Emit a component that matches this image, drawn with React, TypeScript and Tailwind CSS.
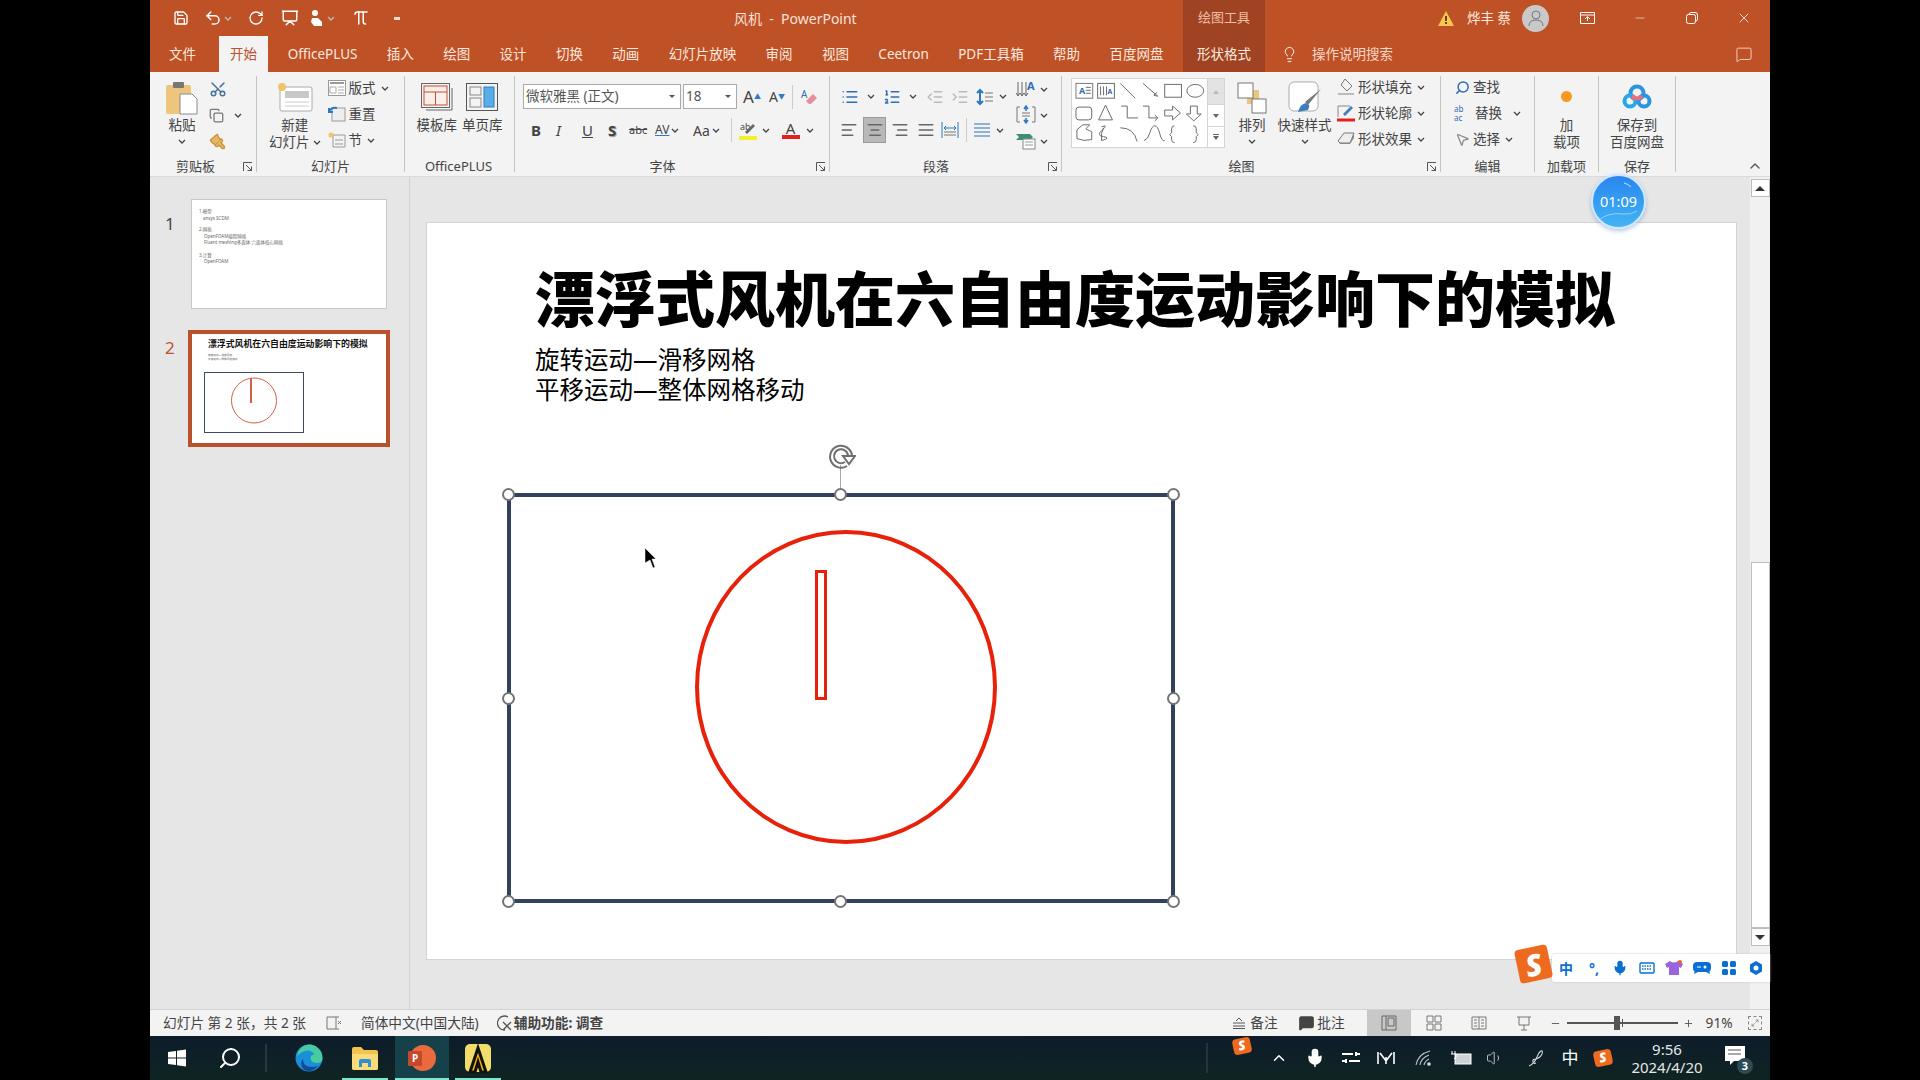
import {
  AlignCenter,
  AlignJustify,
  AlignLeft,
  AlignRight,
  ChevronUp,
  Copy,
  IndentDecrease,
  IndentIncrease,
  Lightbulb,
  List,
  ListOrdered,
  Maximize2,
  MessageSquare,
  Minus,
  MousePointer2,
  Mic,
  Paintbrush,
  Pi,
  Plus,
  Presentation,
  RotateCcw,
  Save,
  Scissors,
  Search,
  Undo2,
  Volume1,
  X,
} from "lucide-react";
import type { ReactNode } from "react";

const tabs = [
  "OfficePLUS",
  "插入",
  "绘图",
  "设计",
  "切换",
  "动画",
  "幻灯片放映",
  "审阅",
  "视图",
  "Ceetron",
  "PDF工具箱",
  "帮助",
  "百度网盘",
];

function Chev({ className = "" }: { className?: string }) {
  return (
    <svg viewBox="0 0 8 5" className={"h-[5px] w-[8px] shrink-0 " + className} fill="none" stroke="#444" strokeWidth="1.3">
      <path d="M1 1l3 3 3-3" />
    </svg>
  );
}

function Launcher({ className = "" }: { className?: string }) {
  return (
    <svg viewBox="0 0 10 10" className={"absolute bottom-[4px] h-[10px] w-[10px] " + className} fill="none" stroke="#555" strokeWidth="1">
      <path d="M.5 9V.5H9M3 3l5.5 5.5M8.5 4.5v4h-4" />
    </svg>
  );
}

function Group({ label, className, labelClass = "", children }: { label: string; className: string; labelClass?: string; children: ReactNode }) {
  return (
    <>
      <div className={"relative flex h-[100px] shrink-0 flex-col " + className}>
        <div className="flex h-[80px] pt-0">{children}</div>
        <div className={"flex h-[20px] items-center justify-center text-[13px] leading-none text-[#444] " + labelClass}>{label}</div>
      </div>
      <div className="h-[96px] w-px shrink-0 bg-[#c4c4c4]" />
    </>
  );
}

function Big({ icon, lines, chev, className = "" }: { icon: ReactNode; lines: string[]; chev?: boolean; className?: string }) {
  return (
    <div className={"flex flex-col items-center text-[13.5px] leading-[17px] text-[#444] " + className}>
      <div className="flex h-[41px] items-center justify-center">{icon}</div>
      {lines.map((line, i) => (
        <div key={i} className="flex items-center gap-[3px] whitespace-nowrap">
          {line}
          {chev && i === lines.length - 1 && lines.length > 1 && <Chev />}
        </div>
      ))}
      {chev && lines.length === 1 && <Chev className="mt-[5px]" />}
    </div>
  );
}

function SmallRow({ icon, text, chev = true, gap = "gap-[3px]" }: { icon: ReactNode; text: string; chev?: boolean; gap?: string }) {
  return (
    <div className={"flex h-[26px] items-center whitespace-nowrap text-[13.5px] text-[#444] " + gap}>
      {icon}
      <span>{text}</span>
      {chev && <Chev className="ml-[2px]" />}
    </div>
  );
}

function ShapeGallery() {
  return (
    <div className="mt-[2px] flex h-[70px] w-[154px] border border-[#d4d4d4] bg-white">
      <svg viewBox="0 0 137 68" className="h-[68px] w-[136px]" fill="none" stroke="#6b6b6b" strokeWidth="1">
        <rect x="4" y="4" width="17" height="15" stroke="#777" />
        <text x="7" y="15" fontSize="9" fill="#2f6eb5" stroke="none" fontWeight="700">A</text>
        <path d="M14 8h5M14 11h5M14 14h5" />
        <rect x="26" y="4" width="17" height="15" />
        <path d="M29 7v9M32 7v9M35 7v9" />
        <text x="36" y="15" fontSize="7" fill="#2f6eb5" stroke="none" fontWeight="700">A</text>
        <path d="M49 4l15 15M72 4l15 13M87 17l-4-1 3-3" />
        <rect x="94" y="5" width="17" height="13" />
        <ellipse cx="125" cy="11.5" rx="8.5" ry="6.5" />
        <rect x="4" y="28" width="16" height="13" rx="3" />
        <path d="M34 26l-7 15h14zM50 27h6v12h11M72 27h6v12h9M84 36l3 3-3 3" />
        <path d="M94 31h8v-4l8 7-8 7v-4h-8zM120 27h7v8h4l-7.5 7-7.5-7h4z" />
        <path d="M5 60V51l6-5h7l-4 4 6 3v8q-8 2-15-1zM30 48q7-3 1 3-7 6 1 7t-2 4q-1-8 2-13" />
        <path d="M49 49q14 0 17 14M73 62q4-1 6-8t5-7 5 8 5 7" />
        <path d="M104 47q-3 0-3 3v4l-2 2 2 2v3q0 3 3 3M123 47q3 0 3 3v4l2 2-2 2v3q0 3-3 3" />
      </svg>
      <div className="flex w-[17px] flex-col border-l border-[#d4d4d4]">
        <div className="flex h-[25px] items-center justify-center bg-[#e3e3e3]">
          <div className="h-0 w-0 border-x-[3px] border-b-[4px] border-x-transparent border-b-[#bbb]" />
        </div>
        <div className="flex h-[23px] items-center justify-center border-y border-[#d4d4d4]">
          <div className="h-0 w-0 border-x-[3px] border-t-[4px] border-x-transparent border-t-[#666]" />
        </div>
        <div className="flex flex-1 flex-col items-center justify-center gap-[1px]">
          <div className="h-px w-[6px] bg-[#666]" />
          <div className="h-0 w-0 border-x-[3px] border-t-[4px] border-x-transparent border-t-[#666]" />
        </div>
      </div>
    </div>
  );
}

function Ribbon() {
  const ic = "h-[18px] w-[18px] shrink-0";
  return (
    <div className="flex h-[104px] shrink-0 bg-[#f3f3f3] pt-[4px]">
      <Group label="剪贴板" className="w-[106px]" labelClass="pr-[15px]">
        <div className="flex w-full">
          <div className="ml-[18px] w-[28px]">
            <Big
              chev
              lines={["粘贴"]}
              icon={
                <svg viewBox="0 0 32 34" className="mt-[3px] h-[34px] w-[32px]">
                  <rect x="0" y="4" width="25" height="29" rx="2" fill="#edc57c" />
                  <rect x="7" y="1" width="11" height="6" rx="1" fill="#777" />
                  <path d="M14 13h12l5 5v15H14z" fill="#fff" stroke="#8a8a8a" />
                </svg>
              }
            />
          </div>
          <div className="ml-[13px] flex flex-col">
            <div className="flex h-[26px] items-center"><Scissors className="h-[18px] w-[18px] -rotate-90 text-[#47709f]" /></div>
            <div className="flex h-[26px] items-center gap-[10px]"><Copy className="h-[15px] w-[15px] text-[#777]" /><Chev /></div>
            <div className="flex h-[26px] items-center"><Paintbrush className="h-[17px] w-[17px] rotate-90 fill-[#e6b566] text-[#c9963f]" /></div>
          </div>
        </div>
        <Launcher className="right-[3px]" />
      </Group>

      <Group label="幻灯片" className="w-[147px]">
        <div className="ml-[12px] flex">
          <Big
            chev
            lines={["新建", "幻灯片"]}
            icon={
              <svg viewBox="0 0 36 30" className="h-[30px] w-[36px]">
                <rect x="3" y="5" width="32" height="24" rx="2" fill="#fff" stroke="#aaa" />
                <rect x="8" y="9" width="24" height="7" fill="#c8c8c8" />
                <path d="M8 20h24M8 24h24" stroke="#ccc" />
                <circle cx="5" cy="5" r="4" fill="#f1c36a" />
              </svg>
            }
          />
          <div className="-mt-[1px] ml-[7px] flex flex-col">
            <SmallRow icon={<svg viewBox="0 0 18 16" className={ic}><rect x=".5" y=".5" width="17" height="15" fill="#fff" stroke="#999" /><path d="M2 3h14" stroke="#999" strokeWidth="2" /><path d="M2 7h6v6H2zM10 7h6M10 10h6M10 13h6" stroke="#aaa" fill="none" /></svg>} text="版式" />
            <SmallRow chev={false} icon={<svg viewBox="0 0 18 16" className={ic}><rect x="4" y="2" width="13" height="13" fill="#eee" stroke="#999" /><path d="M1 6q2-5 8-4M1 2v4h4" fill="none" stroke="#2f78c2" strokeWidth="2" /></svg>} text="重置" />
            <SmallRow icon={<svg viewBox="0 0 18 16" className={ic}><path d="M5 3h12M5 3v12h12V3M7 8h8M7 12h8" fill="none" stroke="#999" /><circle cx="3" cy="3" r="2.5" fill="#f1c36a" /></svg>} text="节" />
          </div>
        </div>
      </Group>

      <Group label="OfficePLUS" className="w-[109px]" labelClass="pr-[2px]">
        <div className="flex w-full justify-center gap-[5px]">
          <Big lines={["模板库"]} icon={
            <svg viewBox="0 0 32 28" className="h-[28px] w-[32px]" fill="none">
              <rect x=".5" y=".5" width="28" height="24" stroke="#666" />
              <path d="M31 5v22H5" stroke="#666" />
              <rect x="3" y="3" width="23" height="19" fill="#fbeee9" stroke="#c0503a" />
              <path d="M3 9h23M14.5 9v13" stroke="#c0503a" />
            </svg>
          } />
          <Big lines={["单页库"]} icon={
            <svg viewBox="0 0 32 28" className="h-[28px] w-[32px]" fill="none">
              <rect x=".5" y=".5" width="31" height="27" stroke="#555" />
              <rect x="4" y="4" width="11" height="8" stroke="#888" />
              <rect x="4" y="15" width="11" height="9" stroke="#888" />
              <rect x="18" y="4" width="10" height="20" fill="#5aaee8" stroke="#2f78c2" />
            </svg>
          } />
        </div>
      </Group>

      <Group label="字体" className="w-[314px]" labelClass="pr-[19px]">
        <div className="flex w-full flex-col pl-[8px]">
          <div className="mt-[8px] flex h-[25px] items-center">
            <div className="flex h-[25px] w-[158px] items-center justify-between border border-[#aaa] bg-white pl-[2px] pr-[5px] text-[13.5px] text-[#555]">
              微软雅黑 (正文)
              <div className="h-0 w-0 border-x-[3px] border-t-[3px] border-x-transparent border-t-[#555]" />
            </div>
            <div className="ml-[2px] flex h-[25px] w-[54px] items-center justify-between border border-[#aaa] bg-white pl-[2px] pr-[5px] text-[13.5px] text-[#555]">
              18
              <div className="h-0 w-0 border-x-[3px] border-t-[3px] border-x-transparent border-t-[#555]" />
            </div>
            <span className="ml-[6px] w-[24px] text-[17px] text-[#444]">A<sup className="text-[7px] text-[#2f78c2]">▲</sup></span>
            <span className="w-[24px] pl-[2px] text-[14px] text-[#444]">A<sup className="text-[7px] text-[#2f78c2]">▼</sup></span>
            <div className="ml-[1px] h-[24px] w-px bg-[#ccc]" />
            <svg viewBox="0 0 18 18" className="ml-[7px] h-[18px] w-[18px]">
              <text x="1" y="10" fontSize="10" fill="#3a6ea5">A</text>
              <path d="M6 13l7-7 4 4-6 6H9z" fill="#e88d9b" />
            </svg>
          </div>
          <div className="mt-[8px] flex h-[26px] items-center text-[#444]">
            <span className="ml-[8px] w-[25px] text-[15px] font-bold">B</span>
            <span className="w-[26px] text-[15px] italic">I</span>
            <span className="w-[26px] text-[15px] underline">U</span>
            <span className="w-[21px] text-[15px] font-bold [text-shadow:1px_1px_1px_#999]">S</span>
            <span className="w-[26px] text-[11px] line-through">abc</span>
            <span className="flex w-[33px] items-center gap-[2px] text-[12px] underline decoration-[#2f78c2]">AV<Chev /></span>
            <span className="ml-[5px] flex w-[38px] items-center gap-[2px] text-[14px]">Aa<Chev /></span>
            <div className="h-[24px] w-px bg-[#ccc]" />
            <div className="ml-[7px] flex w-[34px] items-center gap-[5px]">
              <svg viewBox="0 0 18 19" className="h-[19px] w-[18px]">
                <text x="1" y="9" fontSize="9" fill="#444">ab</text>
                <path d="M6 11l8-8 2 2-8 8z" fill="#666" />
                <rect y="15" width="18" height="4" fill="#f4f02a" />
              </svg>
              <Chev />
            </div>
            <div className="ml-[8px] flex items-center gap-[6px]">
              <div className="flex w-[19px] flex-col items-center">
                <span className="text-[15px] leading-[14px]">A</span>
                <div className="h-[4px] w-[18px] bg-[#e3201b]" />
              </div>
              <Chev />
            </div>
          </div>
        </div>
        <Launcher className="right-[3px]" />
      </Group>

      <Group label="段落" className="w-[231px]" labelClass="pr-[19px]">
        <div className="flex w-full">
          <div className="ml-[11px] flex flex-col">
            <div className="mt-[8px] flex h-[25px] items-center text-[#555]">
              <List className="h-[18px] w-[18px] text-[#2f6eb5]" />
              <Chev className="ml-[8px]" />
              <ListOrdered className="ml-[8px] h-[18px] w-[18px] text-[#2f6eb5]" />
              <Chev className="ml-[8px]" />
              <IndentDecrease className="ml-[9px] h-[18px] w-[18px] text-[#bbb]" />
              <IndentIncrease className="ml-[7px] h-[18px] w-[18px] text-[#bbb]" />
              <svg viewBox="0 0 18 18" className="ml-[7px] h-[18px] w-[18px]" fill="none">
                <path d="M4 2v14M1 5l3-3 3 3M1 13l3 3 3-3" stroke="#2f78c2" strokeWidth="2" />
                <path d="M9 5h8M9 9h8M9 13h8" stroke="#777" />
              </svg>
              <Chev className="ml-[5px]" />
            </div>
            <div className="-ml-[1px] mt-[8px] flex h-[26px] items-center text-[#666]">
              <AlignLeft className="h-[18px] w-[18px]" />
              <div className="ml-[5px] flex h-[26px] w-[23px] items-center justify-center border border-[#999] bg-[#b8b8b8]">
                <AlignCenter className="h-[18px] w-[18px]" />
              </div>
              <AlignRight className="ml-[5px] h-[18px] w-[18px]" />
              <AlignJustify className="ml-[8px] h-[18px] w-[18px]" />
              <svg viewBox="0 0 18 18" className="ml-[6px] h-[18px] w-[18px]" fill="none">
                <path d="M1 1v16M17 1v16" stroke="#2f78c2" />
                <path d="M5 5l-2 2 2 2M13 5l2 2-2 2M3 7h12" stroke="#2f78c2" />
                <path d="M3 11h12M3 14h12" stroke="#777" />
              </svg>
              <div className="ml-[7px] h-[24px] w-px bg-[#ccc]" />
              <svg viewBox="0 0 18 18" className="ml-[6px] h-[18px] w-[18px]" fill="none" stroke="#2f6eb5">
                <path d="M1 3h16M1 7h16M1 11h16M1 15h16" />
              </svg>
              <Chev className="ml-[5px]" />
            </div>
          </div>
          <div className="ml-[9px] flex flex-col">
            <div className="flex h-[26px] items-center gap-[4px]">
              <svg viewBox="0 0 20 20" className="h-[20px] w-[20px]" fill="none">
                <path d="M2 3v13M6 3v13M10 3v13M0 14l2 3 2-3M4 14l2 3 2-3M8 14l2 3 2-3" stroke="#666" />
                <text x="11" y="11" fontSize="11" fill="#2f6eb5" fontWeight="700">A</text>
              </svg>
              <Chev />
            </div>
            <div className="flex h-[26px] items-center gap-[4px]">
              <svg viewBox="0 0 20 20" className="h-[20px] w-[20px]" fill="none">
                <path d="M4 2H1v15h3M16 2h3v15h-3M6 8h8M6 11h8" stroke="#777" />
                <path d="M10 1v5M8 4l2-3 2 3M10 13v5M8 15l2 3 2-3" stroke="#2f78c2" strokeWidth="1.5" />
              </svg>
              <Chev />
            </div>
            <div className="flex h-[26px] items-center gap-[4px]">
              <svg viewBox="0 0 20 18" className="h-[18px] w-[20px]">
                <path d="M0 2h14l3 3-3 3H0l3-3z" fill="#3f8f6f" />
                <rect x="7" y="7" width="12" height="10" fill="#fff" stroke="#888" />
                <path d="M9 10h8M9 13h8" stroke="#999" />
              </svg>
              <Chev />
            </div>
          </div>
        </div>
        <Launcher className="right-[3px]" />
      </Group>

      <Group label="绘图" className="w-[378px]" labelClass="pr-[19px]">
        <div className="flex w-full">
          <div className="ml-[9px]"><ShapeGallery /></div>
          <div className="ml-[12px] w-[30px]">
            <Big chev lines={["排列"]} icon={
              <svg viewBox="0 0 30 32" className="mt-[2px] h-[32px] w-[30px]">
                <rect x="10" y="8" width="12" height="14" fill="#edc57c" />
                <rect x="1" y="1" width="15" height="15" fill="#fff" stroke="#777" />
                <rect x="15" y="17" width="14" height="14" fill="#fff" stroke="#777" />
              </svg>
            } />
          </div>
          <div className="ml-[9px] w-[57px]">
            <Big chev lines={["快速样式"]} icon={
              <svg viewBox="0 0 34 36" className="mt-[4px] h-[36px] w-[34px]">
                <rect x="1" y="1" width="29" height="29" rx="5" fill="#fff" stroke="#aaa" />
                <path d="M33 8L20 24l-3-3z" fill="#777" />
                <path d="M18 22q-6 1-8 9l10-2q2-3 1-5z" fill="#3f7fc0" />
              </svg>
            } />
          </div>
          <div className="-mt-[2px] ml-[4px] flex flex-col">
            <SmallRow icon={<svg viewBox="0 0 18 18" className={ic} fill="none"><path d="M8 1l7 7-5 5-6-6z" stroke="#777" /><path d="M1 16h16" stroke="#bbb" strokeWidth="2" /></svg>} text="形状填充" />
            <SmallRow icon={<svg viewBox="0 0 18 18" className={ic} fill="none"><path d="M1 13V2h12" stroke="#888" /><path d="M6 10l8-8 2 2-8 8z" fill="#3f7fc0" /><path d="M0 16h18" stroke="#e3201b" strokeWidth="3" /></svg>} text="形状轮廓" />
            <SmallRow icon={<svg viewBox="0 0 18 18" className={ic}><path d="M1 11l6-8h10l-4 10H3z" fill="#eee" stroke="#777" /><path d="M13 13l4-10v5l-4 6H3l-2-3 2 2z" fill="#888" /></svg>} text="形状效果" />
          </div>
        </div>
        <Launcher className="right-[3px]" />
      </Group>

      <Group label="编辑" className="w-[93px]">
        <div className="-mt-[2px] flex flex-col pl-[14px]">
          <SmallRow chev={false} gap="gap-[3px]" icon={<Search className="h-[15px] w-[15px] -scale-x-100 text-[#2f6eb5]" strokeWidth={2.4} />} text="查找" />
          <div className="flex h-[26px] items-center text-[13.5px] text-[#444]">
            <span className="-ml-[1px] flex w-[21px] flex-col text-[8px] leading-[9px] text-[#2f6eb5]"><span>ab</span><span>ac</span></span>
            <span>替换</span>
            <Chev className="ml-[11px]" />
          </div>
          <SmallRow gap="gap-[3px]" icon={<MousePointer2 className="h-[15px] w-[15px] text-[#888]" />} text="选择" />
        </div>
      </Group>

      <Group label="加载项" className="w-[63px]">
        <div className="w-full">
          <Big lines={["加", "载项"]} icon={<div className="h-[11px] w-[11px] rounded-full bg-[#f59a23]" />} />
        </div>
      </Group>

      <Group label="保存" className="w-[76px]">
        <div className="w-full">
          <Big lines={["保存到", "百度网盘"]} icon={
            <svg viewBox="0 0 30 26" className="h-[26px] w-[30px]" fill="none">
              <circle cx="15" cy="9" r="6.5" stroke="#2b93e0" strokeWidth="4" />
              <circle cx="8" cy="17" r="5.5" stroke="#27a7e6" strokeWidth="4" />
              <circle cx="22" cy="17" r="5.5" stroke="#2b93e0" strokeWidth="4" />
              <path d="M10 12q5 5 10 0" stroke="#e8707a" strokeWidth="4" />
            </svg>
          } />
        </div>
      </Group>

      <div className="flex flex-1 items-end justify-end pb-[2px] pr-[7px]">
        <ChevronUp className="h-[16px] w-[16px] text-[#555]" />
      </div>
    </div>
  );
}

function ThumbOne() {
  return (
    <div className="ml-[41px] mt-[22px] h-[110px] w-[196px] border border-[#c8c8c8] bg-white pl-[7px] pt-[8px] text-[4.5px] leading-[6.5px] text-[#666]">
      <div>1.模型</div>
      <div className="pl-[4px]">ansys SCDM</div>
      <div className="mt-[5px]">2.网格</div>
      <div className="pl-[5px]">OpenFOAM编程网格</div>
      <div className="pl-[5px]">Fluent meshing多面体 六面体核心网格</div>
      <div className="mt-[6px]">3.计算</div>
      <div className="pl-[5px]">OpenFOAM</div>
    </div>
  );
}

function ThumbTwo() {
  return (
    <div className="ml-[38px] mt-[21px] flex h-[117px] w-[202px] flex-col border-[4px] border-[#b9512c] bg-white pl-[16px] pt-[3px]">
      <div className="whitespace-nowrap text-[8.9px] font-bold leading-[14px] text-[#111]">漂浮式风机在六自由度运动影响下的模拟</div>
      <div className="mt-[2px] text-[2.7px] leading-[4px] text-[#666]">旋转运动—滑移网格<br />平移运动—整体网格移动</div>
      <svg viewBox="0 0 100 61" className="-ml-[4px] mt-[11px] h-[61px] w-[100px]" fill="none">
        <rect x=".5" y=".5" width="99" height="60" stroke="#3c4a64" />
        <ellipse cx="50" cy="28.5" rx="22.5" ry="22.5" stroke="#d2604a" />
        <rect x="46" y="6" width="2" height="25" fill="#d2604a" />
      </svg>
    </div>
  );
}

function Handle({ className }: { className: string }) {
  return <div className={"absolute h-[13px] w-[13px] rounded-full border-2 border-[#757575] bg-white " + className} />;
}

function Slide() {
  return (
    <div className="relative h-[738px] w-[1311px] border border-[#d4d4d4] bg-white">
      <div className="absolute left-[108px] top-[37px] whitespace-nowrap text-[60px] font-black leading-[78px] text-black">
        漂浮式风机在六自由度运动影响下的模拟
      </div>
      <div className="absolute left-[108px] top-[122px] text-[24.5px] leading-[29.5px] text-black">
        旋转运动—滑移网格
        <br />
        平移运动—整体网格移动
      </div>
      {/* selected shape */}
      <div className="absolute left-[80px] top-[270px] h-[410px] w-[668px] border-[4px] border-[#33415c]" />
      <div className="absolute left-[268px] top-[307px] h-[314px] w-[302px] rounded-[50%] border-[4px] border-[#e8210a]" />
      <div className="absolute left-[388px] top-[347px] h-[130px] w-[12px] border-[3px] border-[#e8210a]" />
      <div className="absolute left-[413px] top-[242px] h-[30px] w-px bg-[#aaa]" />
      <svg viewBox="0 0 28 28" className="absolute left-[401px] top-[219px] h-[28px] w-[28px]" fill="none" stroke="#6f6f6f" strokeWidth="2">
        <path d="M19 24a11 11 0 1 1 5-8" />
        <path d="M17 20a7 7 0 1 1 3-5" />
        <path d="M15 14h12l-6 8z" fill="#fff" />
      </svg>
      <Handle className="left-[75px] top-[265px]" />
      <Handle className="left-[407px] top-[265px]" />
      <Handle className="left-[740px] top-[265px]" />
      <Handle className="left-[75px] top-[469px]" />
      <Handle className="left-[740px] top-[469px]" />
      <Handle className="left-[75px] top-[672px]" />
      <Handle className="left-[407px] top-[672px]" />
      <Handle className="left-[740px] top-[672px]" />
      <svg viewBox="0 0 13 21" className="absolute left-[217px] top-[324px] h-[21px] w-[13px]">
        <path d="M1 1l11 11H8l3 8-2 1-3-8-5 3z" fill="#000" stroke="#fff" strokeWidth=".5" />
      </svg>
    </div>
  );
}

function SogouLogo({ className, size }: { className: string; size: string }) {
  return (
    <div className={"flex rotate-[-12deg] items-center justify-center rounded-[4px] bg-[#ee6a1f] font-black italic text-white " + className + " " + size}>
      S
    </div>
  );
}

function ViewBtn({ children, active = false }: { children: ReactNode; active?: boolean }) {
  return (
    <div className={"flex h-[26px] w-[44px] items-center justify-center " + (active ? "bg-[#c8c8c8]" : "")}>{children}</div>
  );
}

function StatusBar() {
  return (
    <div className="flex h-[27px] shrink-0 items-center border-t border-[#d2d2d2] bg-[#f3f3f3] pl-[13px] text-[13.7px] text-[#444]">
      <span>幻灯片 第 2 张，共 2 张</span>
      <svg viewBox="0 0 16 14" className="ml-[20px] h-[14px] w-[16px]" fill="none" stroke="#777"><path d="M1 1h9v12H1zM10 1h3M10 13h3M12 5l3 3M15 5l-3 3" /></svg>
      <span className="ml-[19px]">简体中文(中国大陆)</span>
      <svg viewBox="0 0 16 16" className="ml-[18px] h-[16px] w-[16px]" fill="none" stroke="#555" strokeWidth="1.3"><path d="M11 2a7 7 0 1 0-3 13M6 7l8 8M14 7l-8 8" /></svg>
      <span className="ml-[1px] font-bold">辅助功能: 调查</span>
      <div className="ml-[629px] flex items-center">
        <svg viewBox="0 0 14 12" className="h-[12px] w-[14px]" fill="none" stroke="#555"><path d="M4 4l3-3 3 3M1 6h12M1 9h12M1 11.5h12" /></svg>
        <span className="ml-[4px] w-[28px] whitespace-nowrap">备注</span>
      </div>
      <div className="ml-[20px] flex items-center">
        <MessageSquare className="h-[16px] w-[17px] fill-[#444] text-[#444]" />
        <span className="ml-[2px] whitespace-nowrap">批注</span>
      </div>
      <div className="ml-[22px] flex items-center gap-[1px]">
        <ViewBtn active>
          <svg viewBox="0 0 16 16" className="h-[16px] w-[16px]" fill="none" stroke="#666"><path d="M1 1h14v14H1zM5 1v14M7 3h6v8H7z" /></svg>
        </ViewBtn>
        <ViewBtn>
          <svg viewBox="0 0 16 16" className="h-[16px] w-[16px]" fill="none" stroke="#777"><path d="M1 1h6v6H1zM9 1h6v6H9zM1 9h6v6H1zM9 9h6v6H9z" /></svg>
        </ViewBtn>
        <ViewBtn>
          <svg viewBox="0 0 16 16" className="h-[16px] w-[16px]" fill="none" stroke="#777"><path d="M1 2h14v12H1zM8 2v12M3 5h3M3 8h3M3 11h3M10 5h3M10 8h3M10 11h3" /></svg>
        </ViewBtn>
        <ViewBtn>
          <svg viewBox="0 0 16 16" className="h-[16px] w-[16px]" fill="none" stroke="#777"><path d="M1 2h14M3 2v8h10V2M8 10v5M5 15h6" /></svg>
        </ViewBtn>
      </div>
      <Minus className="ml-[4px] h-[11px] w-[11px] text-[#555]" />
      <div className="relative ml-[6px] h-[2px] w-[111px] bg-[#555]">
        <div className="absolute left-[47px] top-[-6px] h-[14px] w-[6px] bg-[#555]" />
        <div className="absolute left-[55px] top-[-3px] h-[8px] w-px bg-[#555]" />
      </div>
      <Plus className="ml-[5px] h-[11px] w-[11px] text-[#555]" />
      <span className="ml-[12px]">91%</span>
      <div className="ml-[15px] flex h-[14px] w-[14px] items-center justify-center border border-dashed border-[#888]">
        <Maximize2 className="h-[8px] w-[8px] text-[#777]" />
      </div>
    </div>
  );
}

function Taskbar() {
  return (
    <div className="flex h-[44px] shrink-0 items-center bg-gradient-to-b from-[#0e1c2b] to-[#0f2422] text-white">
      <div className="ml-[18px] flex w-[18px] justify-center">
        <svg viewBox="0 0 18 18" className="h-[18px] w-[18px]" fill="#fff">
          <path d="M0 3l8-1v6.5H0zM9 1.8L18 .5v8H9zM0 9.5h8V16l-8-1zM9 9.5h9v8l-9-1.3z" />
        </svg>
      </div>
      <Search className="ml-[32px] h-[24px] w-[24px] -scale-x-100 text-white" strokeWidth={2} />
      <div className="ml-[23px] h-[28px] w-[2px] bg-[#2a3742]" />
      <div className="ml-[19px] flex h-[44px] w-[46px] items-center justify-center">
        <svg viewBox="0 0 28 28" className="h-[28px] w-[28px]">
          <circle cx="14" cy="14" r="13.5" fill="#1a8fd8" />
          <path d="M14 .5A13.5 13.5 0 0 1 27.5 14q0 5-5 5-7 0-7-5 0-3 4-4-4-5-10-3Q4 9 2 13 4 1 14 .5z" fill="#47cba0" />
          <path d="M8 15q0 8 9 8 3 0 6-1-4 5-9 5-5 0-7-4-2-5 1-8z" fill="#114a9c" />
        </svg>
      </div>
      <div className="relative ml-[10px] flex h-[44px] w-[46px] items-center justify-center">
        <svg viewBox="0 0 26 24" className="h-[24px] w-[26px]">
          <path d="M0 3q0-2 2-2h7l3 3h12q2 0 2 2v16q0 2-2 2H2q-2 0-2-2z" fill="#f2c44b" />
          <path d="M0 8h26v14q0 2-2 2H2q-2 0-2-2z" fill="#fadb7a" />
          <path d="M7 21v-6q0-2 2-2h8q2 0 2 2v6h-3v-4h-6v4z" fill="#2e8fd6" />
        </svg>
        <div className="absolute bottom-0 left-0 right-0 h-[2px] bg-[#7fe6cf]" />
      </div>
      <div className="relative ml-[7px] flex h-[44px] w-[54px] items-center justify-center bg-[#16404a]">
        <div className="relative h-[26px] w-[28px]">
          <div className="absolute right-0 top-0 h-[26px] w-[26px] rounded-full bg-[#ea6a3d]" />
          <div className="absolute left-0 top-[6px] flex h-[15px] w-[14px] items-center justify-center rounded-[1px] bg-[#c6482a] text-[10px] font-bold text-white">P</div>
        </div>
        <div className="absolute bottom-0 left-0 right-0 h-[2px] bg-[#7fe6cf]" />
      </div>
      <div className="relative ml-[6px] flex h-[44px] w-[46px] items-center justify-center">
        <svg viewBox="0 0 28 30" className="h-[30px] w-[28px]">
          <rect x="1" y="1" width="26" height="28" rx="5" fill="#f2dc6a" />
          <path d="M14 5L6 29h5l3-10 3 10h5z" fill="#f7b500" stroke="#111" strokeWidth="3" />
        </svg>
        <div className="absolute bottom-0 left-0 right-0 h-[2px] bg-[#7fe6cf]" />
      </div>

      <div className="ml-[705px] h-[30px] w-[2px] bg-[#26333e]" />
      <div className="relative ml-[34px] h-[44px] w-0">
        <SogouLogo className="absolute -left-[9px] top-[2px] text-[13px]" size="h-[16px] w-[18px]" />
      </div>
      <ChevronUp className="ml-[28px] h-[18px] w-[18px]" />
      <Mic className="ml-[17px] h-[20px] w-[20px] fill-white" />
      <svg viewBox="0 0 18 14" className="ml-[17px] h-[14px] w-[18px]" fill="#fff"><path d="M0 2h11v2H0zM13 1h2v4h-2zM15 2h3v2h-3zM7 9h11v2H7zM3 8h2v4H3zM0 9h3v2H0z" /></svg>
      <svg viewBox="0 0 18 14" className="ml-[17px] h-[14px] w-[18px]" fill="none" stroke="#fff" strokeWidth="1.6"><path d="M1 1v12M17 1v12M3 2l6 8 6-8M9 6v7" /></svg>
      <svg viewBox="0 0 18 16" className="ml-[20px] h-[16px] w-[18px]" fill="none" stroke="#b8c0c6" strokeWidth="1.1"><path d="M1 15Q3 4 15 1M5 15q1-7 9-10M9 15q1-4 5-6" /><circle cx="14" cy="14" r="1.3" fill="#fff" /></svg>
      <svg viewBox="0 0 22 14" className="ml-[17px] h-[14px] w-[22px]" fill="none" stroke="#fff"><rect x="5" y="3" width="16" height="10" fill="#cfd3d6" /><path d="M2 0v3M5 0v3M1 3h5v3l-2 2" /></svg>
      <Volume1 className="ml-[14px] h-[18px] w-[18px] text-[#b8c0c6]" strokeWidth={1.3} />
      <svg viewBox="0 0 16 18" className="ml-[24px] h-[18px] w-[16px]" fill="none" stroke="#d4d8da" strokeWidth="1.1"><path d="M1 17q5-2 8-9 2-5 4-6t1 3q-2 4-6 5-4 0-3 3 1 2 3 1" /></svg>
      <span className="ml-[16px] w-[20px] text-center text-[17px]">中</span>
      <SogouLogo className="ml-[14px] text-[13px]" size="h-[16px] w-[18px]" />
      <div className="ml-[9px] flex w-[92px] flex-col items-center text-[15px] leading-[18px] text-[#e6e6e6]">
        <span>9:56</span>
        <span>2024/4/20</span>
      </div>
      <div className="relative ml-[12px] h-[24px] w-[22px]">
        <svg viewBox="0 0 20 20" className="h-[20px] w-[20px]" fill="#fff"><path d="M0 0h20v15H9l-4 4v-4H0z" /><path d="M3 4h13M3 8h13" stroke="#555" /></svg>
        <div className="absolute -right-[6px] bottom-[-4px] flex h-[16px] w-[16px] items-center justify-center rounded-full bg-[#2e4a52] text-[11px] font-bold">3</div>
      </div>
    </div>
  );
}

function SogouBar() {
  const glyph = "w-[28px] text-center text-[14px] font-bold text-[#0a6fd0]";
  return (
    <div className="absolute bottom-[27px] right-0 flex h-[28px] w-[218px] items-center rounded-l-[2px] bg-white shadow-[0_0_2px_#bbb]">
      <SogouLogo className="absolute -left-[35px] -top-[7px] text-[30px]" size="h-[34px] w-[33px]" />
      <span className={glyph}>中</span>
      <span className={glyph}>°,</span>
      <Mic className="ml-[4px] h-[16px] w-[16px] fill-[#0a6fd0] text-[#0a6fd0]" />
      <svg viewBox="0 0 16 12" className="ml-[11px] h-[12px] w-[16px]" fill="none" stroke="#0a6fd0" strokeWidth="1.4"><rect x="1" y="1" width="14" height="10" rx="1" /><path d="M3 4h10M3 7h10" strokeDasharray="1.5 1" /></svg>
      <svg viewBox="0 0 18 16" className="ml-[10px] h-[16px] w-[18px]"><path d="M5 1L0 4l2 4 2-1v8h10V7l2 1 2-4-5-3q-4 3-8 0z" fill="#9a63e0" /><circle cx="15" cy="2" r="2" fill="#f0602a" /></svg>
      <svg viewBox="0 0 18 14" className="ml-[10px] h-[14px] w-[18px]" fill="#0a6fd0"><rect x="0" y="1" width="18" height="10" rx="4" /><path d="M2 9l-1 4 4-2zM16 9l1 4-4-2z" /><circle cx="12" cy="6" r="1.5" fill="#fff" /><path d="M4 5.5h4v1H4z" fill="#fff" /></svg>
      <svg viewBox="0 0 14 14" className="ml-[11px] h-[14px] w-[14px]" fill="#0a6fd0"><rect width="6" height="6" rx="1.5" /><rect x="8" width="6" height="6" rx="1.5" /><rect y="8" width="6" height="6" rx="1.5" /><rect x="8" y="8" width="6" height="6" rx="1.5" /></svg>
      <svg viewBox="0 0 14 14" className="ml-[13px] h-[14px] w-[14px]"><path d="M7 0l6 3.5v7L7 14l-6-3.5v-7z" fill="#0a6fd0" /><circle cx="7" cy="7" r="2.5" fill="#fff" /></svg>
    </div>
  );
}

export default function App() {
  return (
    <div className="flex h-[1080px] w-[1920px] overflow-hidden bg-black pl-[150px] [font-family:'Noto_Sans','Noto_Sans_CJK_SC',sans-serif]">
      <div className="relative flex h-[1080px] w-[1620px] flex-col">
        {/* title bar */}
        <div className="flex h-[36px] shrink-0 bg-[#bf5127] text-white">
          <div className="flex w-[1033px] items-center pl-[23px]">
            <Save className="h-[16px] w-[16px]" />
            <Undo2 className="ml-[15px] h-[18px] w-[18px]" />
            <Chev className="ml-[2px] invert" />
            <RotateCcw className="ml-[16px] h-[16px] w-[16px] -scale-y-100 rotate-180" />
            <Presentation className="ml-[17px] h-[18px] w-[18px]" />
            <svg viewBox="0 0 14 18" className="ml-[10px] h-[18px] w-[14px]" fill="#fff"><circle cx="6" cy="4" r="3" /><path d="M3 9h6l4 4v4H5l-3-4z" /></svg>
            <Chev className="ml-[4px] invert" />
            <Pi className="ml-[17px] h-[18px] w-[18px]" />
            <div className="ml-[24px] h-[3px] w-[6px] bg-white/80" />
            <span className="ml-[334px] whitespace-nowrap text-[14px] text-[#f6e2d8]">风机&nbsp; -&nbsp; PowerPoint</span>
          </div>
          <div className="flex w-[82px] items-center justify-center bg-[#9f4322] text-[13px] text-[#eebfa6]">绘图工具</div>
          <div className="flex flex-1 items-center">
            <svg viewBox="0 0 16 15" className="ml-[173px] h-[15px] w-[16px]"><path d="M8 0l8 15H0z" fill="#f5c84c" /><path d="M7 5h2v5H7zM7 11h2v2H7z" fill="#7a3a10" /></svg>
            <span className="ml-[13px] whitespace-nowrap text-[13.5px] text-[#fbe9df]">烨丰 蔡</span>
            <div className="ml-[11px] flex h-[27px] w-[27px] items-center justify-center rounded-full bg-[#c9c9c9]">
              <svg viewBox="0 0 16 16" className="h-[16px] w-[16px]" fill="none" stroke="#777"><circle cx="8" cy="5" r="4" /><path d="M1 16q0-6 7-6t7 6" /></svg>
            </div>
            <svg viewBox="0 0 15 12" className="ml-[31px] h-[12px] w-[15px]" fill="none" stroke="#fff"><path d="M.5.5h14v11H.5zM.5 3h14M7.5 9V5M5 7l2.5-2.5L10 7" /></svg>
            <Minus className="ml-[38px] h-[14px] w-[14px]" strokeWidth={1} />
            <svg viewBox="0 0 12 12" className="ml-[39px] h-[12px] w-[12px]" fill="none" stroke="#fff"><rect x=".5" y="2.5" width="9" height="9" rx="2" /><path d="M3 2.5Q3 .5 5 .5h4q2.5 0 2.5 2.5v4q0 2-2 2" /></svg>
            <X className="ml-[38px] h-[16px] w-[16px]" strokeWidth={1.2} />
          </div>
        </div>

        {/* tabs */}
        <div className="flex h-[36px] shrink-0 items-stretch bg-[#bf5127] text-[13.5px] text-[#fbe9df]">
          <div className="ml-[19px] flex w-[27px] items-center justify-center">文件</div>
          <div className="ml-[23px] flex w-[49px] items-center justify-center bg-[#f3f3f3] text-[#b9512c]">开始</div>
          <div className="ml-[5px] flex">
            {tabs.map((t) => (
              <div key={t} className="flex items-center whitespace-nowrap px-[14.7px]">{t}</div>
            ))}
          </div>
          <div className="ml-auto flex w-[82px] items-center justify-center bg-[#9f4322]">形状格式</div>
          <div className="flex w-[505px] items-center">
            <Lightbulb className="ml-[16px] h-[17px] w-[17px] text-white" strokeWidth={1.3} />
            <span className="ml-[14px] text-[#f6d8c8]">操作说明搜索</span>
            <MessageSquare className="ml-auto mr-[17px] h-[17px] w-[18px] text-white" strokeWidth={1} />
          </div>
        </div>

        <Ribbon />

        {/* work area */}
        <div className="relative flex min-h-0 flex-1 border-t border-[#dadada] bg-[#e6e6e6]">
          <div className="w-[260px] shrink-0 border-r border-[#d2d2d2]">
            <div className="relative">
              <span className="absolute left-[15px] top-[12px] text-[17px] text-[#444]">1</span>
              <ThumbOne />
            </div>
            <div className="relative">
              <span className="absolute left-[15px] top-[5px] text-[17px] text-[#c0522d]">2</span>
              <ThumbTwo />
            </div>
          </div>
          <div className="min-w-0 flex-1 pl-[16px] pt-[45px]">
            <Slide />
          </div>
          {/* scrollbar */}
          <div className="flex w-[20px] shrink-0 flex-col items-center bg-[#f1f1f1]">
            <div className="mt-[2px] flex h-[18px] w-[19px] items-center justify-center border border-[#bdbdbd] bg-white">
              <div className="h-0 w-0 border-x-[5px] border-b-[5px] border-x-transparent border-b-[#333]" />
            </div>
            <div className="mt-[365px] h-[366px] w-[19px] border border-[#bdbdbd] bg-white" />
            <div className="flex h-[18px] w-[19px] items-center justify-center border border-[#bdbdbd] bg-white">
              <div className="h-0 w-0 border-x-[5px] border-t-[5px] border-x-transparent border-t-[#333]" />
            </div>
          </div>
          <SogouBar />
        </div>

        <StatusBar />
        <Taskbar />

        {/* floating timer */}
        <div className="absolute left-[1441px] top-[174px] flex h-[55px] w-[55px] items-center justify-center overflow-hidden rounded-full border-[2px] border-[#cfe6fb] bg-gradient-to-b from-[#2a86ee] to-[#43b4f4] text-[14.5px] text-white shadow-[0_2px_4px_rgba(60,120,200,0.4)]">
          <svg viewBox="0 0 51 51" className="absolute inset-0 h-full w-full" fill="none" stroke="#bfe3ff" strokeWidth="1">
            <path d="M31 7q4 1 7 4" />
            <path d="M6 44q10-8 24-6 8 1 14-3" stroke="#8fd2fb" />
          </svg>
          <span className="relative">01:09</span>
        </div>
      </div>
    </div>
  );
}
